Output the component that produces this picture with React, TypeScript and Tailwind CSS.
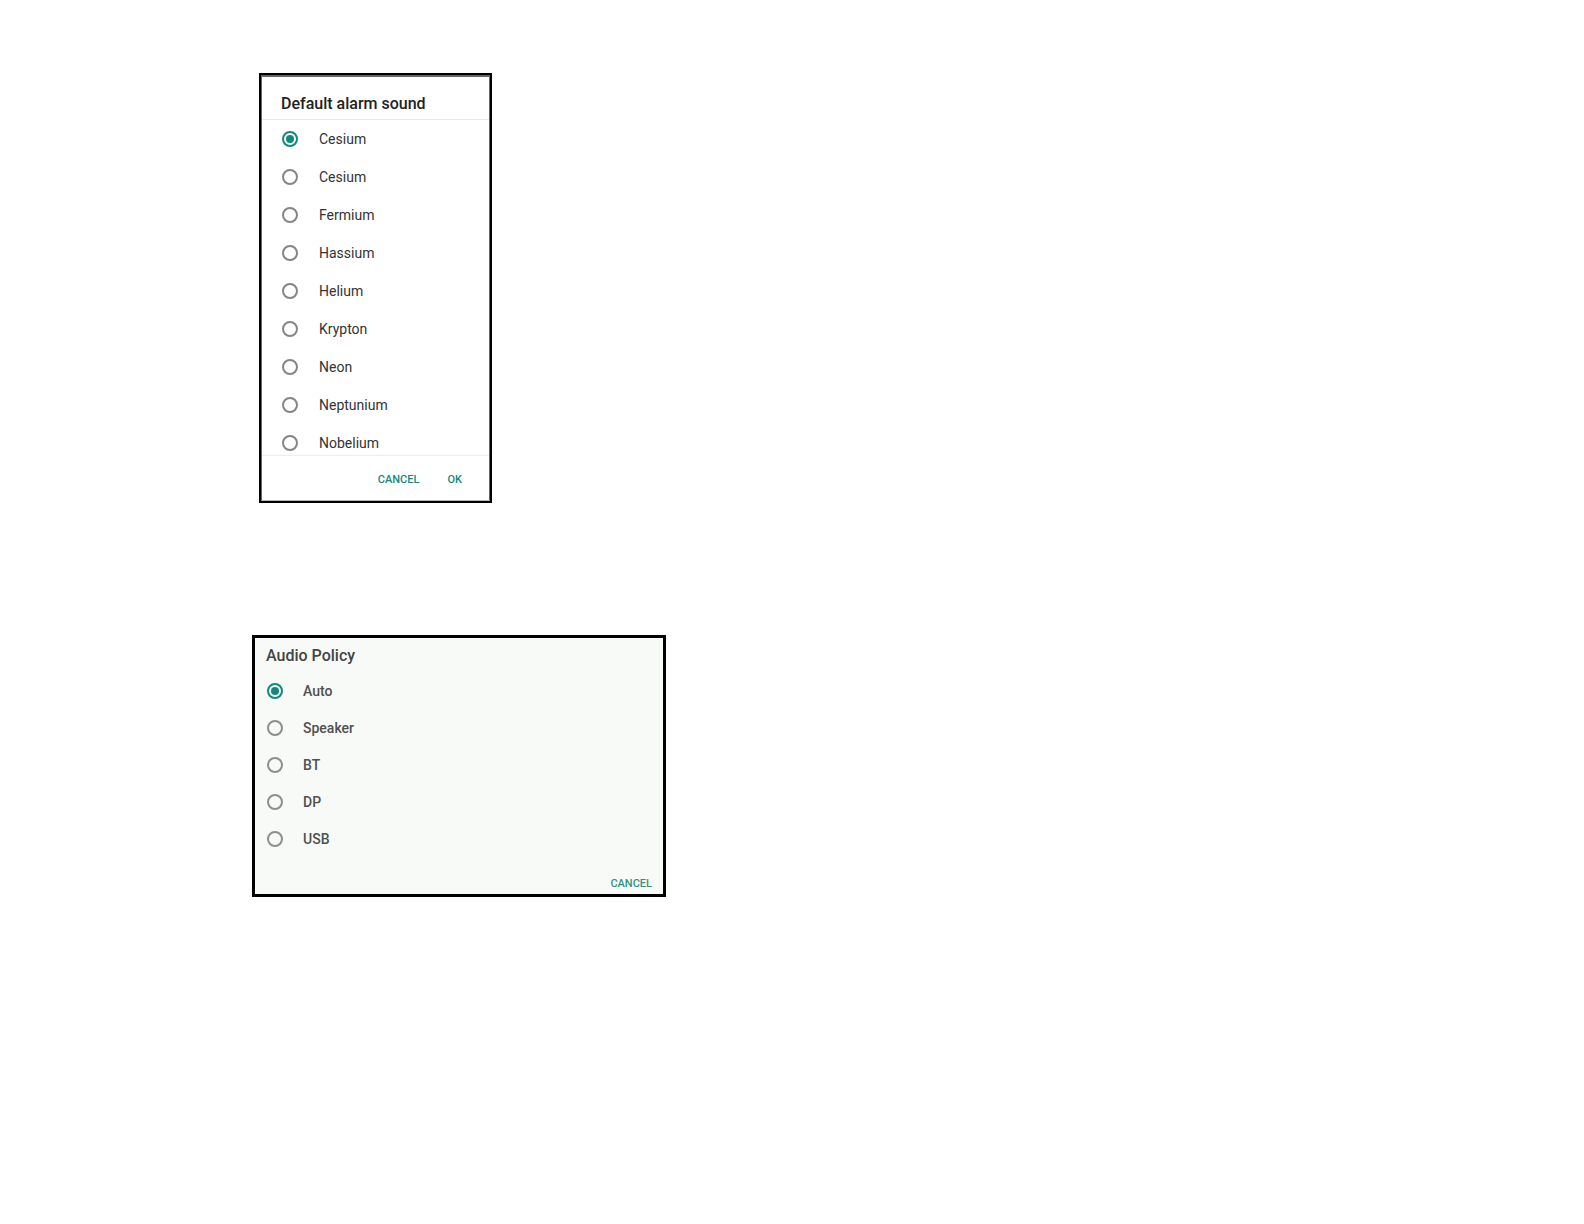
type RadioListProps = {
  name: string;
  options: { id: string; label: string }[];
  rowClass: string;
  radioClass: string;
};

const alarmSounds = [
  { id: "cesium-default", label: "Cesium" },
  { id: "cesium", label: "Cesium" },
  { id: "fermium", label: "Fermium" },
  { id: "hassium", label: "Hassium" },
  { id: "helium", label: "Helium" },
  { id: "krypton", label: "Krypton" },
  { id: "neon", label: "Neon" },
  { id: "neptunium", label: "Neptunium" },
  { id: "nobelium", label: "Nobelium" },
];

const audioPolicies = [
  { id: "auto", label: "Auto" },
  { id: "speaker", label: "Speaker" },
  { id: "bt", label: "BT" },
  { id: "dp", label: "DP" },
  { id: "usb", label: "USB" },
];

const RadioList = ({ name, options, rowClass, radioClass }: RadioListProps) => {
  return (
    <div role="radiogroup" aria-labelledby={`${name}-title`}>
      {options.map((option, index) => (
        <label key={option.id} htmlFor={`${name}-${option.id}`} className={`flex items-center ${rowClass}`}>
          <input
            type="radio"
            id={`${name}-${option.id}`}
            name={name}
            value={option.id}
            defaultChecked={index === 0}
            className={`grid size-4 shrink-0 appearance-none place-content-center rounded-full border-2 checked:border-[#12897b] checked:before:size-2 checked:before:rounded-full checked:before:bg-[#12897b] ${radioClass}`}
          />
          {option.label}
        </label>
      ))}
    </div>
  );
};

const App = () => {
  return (
    <main className="min-h-screen bg-white pt-[73px] pl-[252px] font-[Roboto,sans-serif]">
      <section className="ml-[7px] w-full max-w-[233px] border-2 border-black bg-white">
        <div className="border-x border-t-2 border-b border-[#666666] border-b-[#bbbbbb]">
          <h2 id="alarm-title" className="flex h-[43px] items-end border-b border-[#e9e9e9] pb-[3px] pl-[19px] text-base leading-6 font-medium text-[#222222]">
            Default alarm sound
          </h2>
          <div className="max-h-[335px] overflow-hidden">
            <RadioList name="alarm" options={alarmSounds} rowClass="h-[38px] gap-[21px] pl-5 text-sm text-[#333333]" radioClass="border-[#858585]" />
          </div>
          <div className="flex h-[45px] items-center justify-end gap-7 border-t border-[#eeeeee] pt-1 pr-[27px] text-[11px] font-medium text-[#12897b]">
            <button type="button">CANCEL</button>
            <button type="button">OK</button>
          </div>
        </div>
      </section>

      <section className="mt-[132px] w-full max-w-[414px] border-3 border-black bg-[#f7faf7]">
        <h2 id="policy-title" className="pt-1.5 pb-1 pl-[11px] text-base leading-6 font-medium text-[#444444]">
          Audio Policy
        </h2>
        <RadioList name="policy" options={audioPolicies} rowClass="h-[37px] gap-5 pl-3 text-sm font-medium text-[#505050]" radioClass="border-[#8e8e8e]" />
        <div className="flex justify-end pt-[19px] pr-[11px] pb-0.5 text-[11px] leading-4 font-medium text-[#329482]">
          <button type="button">CANCEL</button>
        </div>
      </section>
    </main>
  );
};

export default App;
